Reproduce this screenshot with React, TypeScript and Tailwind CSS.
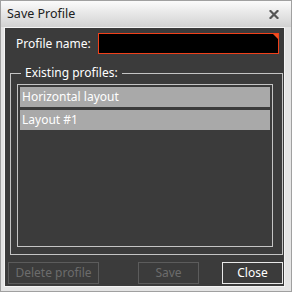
import React from 'react';

const font = { fontFamily: '"Noto Sans", "Open Sans", sans-serif' };

function SaveProfileDialog() {
  const profiles = ['Horizontal layout', 'Layout #1'];

  return (
    <div
      className="w-[292px] h-[292px] flex flex-col bg-[#e4e4e4] border border-[#a0a0a0] text-[12px]"
      style={font}
    >
      <div className="h-[26px] flex items-center justify-between pl-[6px] pr-[12px] bg-gradient-to-b from-[#fbfbfb] to-[#d2d2d2]">
        <span className="text-[#202020] text-[12.5px]">Save Profile</span>
        <svg width="10" height="9" viewBox="0 0 10 9">
          <path d="M1.5 1 L8.5 8 M8.5 1 L1.5 8" stroke="#555" strokeWidth="2.2" strokeLinecap="square" />
        </svg>
      </div>
      <div className="flex-1 ml-[3px] mr-[6px] mb-[4px] flex flex-col border border-[#f4f4f4] bg-[#3b3b3b]">
        <div className="flex items-center mt-[5px] h-[21px]">
          <span className="ml-[11px] w-[82px] text-white">Profile name:</span>
          <div className="relative w-[181px] h-[21px] bg-black border border-[#f0401a]">
            <div className="absolute top-0 right-0 w-0 h-0 border-t-[5px] border-l-[5px] border-t-[#f0501e] border-l-transparent" />
          </div>
        </div>
        <fieldset className="mt-[11px] ml-[5px] mr-[1px] border border-[#c4c4c4] pl-[6px] pr-[9px] pb-[7px]">
          <legend className="ml-[4px] px-[4px] text-white leading-[16px]">Existing profiles:</legend>
          <div className="mt-[3px] h-[163px] border border-[#c4c4c4] p-[2px] flex flex-col gap-[3px]">
            {profiles.map((p) => (
              <div key={p} className="h-[20px] bg-[#a9a9a9] text-white pl-[2px] leading-[20px]">
                {p}
              </div>
            ))}
          </div>
        </fieldset>
        <div className="flex mt-[7px] h-[22px]">
          <button className="ml-[3px] w-[91px] border border-[#5c5c5c] text-[#6c6c6c]">Delete profile</button>
          <button className="ml-[39px] w-[61px] border border-[#5c5c5c] text-[#6c6c6c]">Save</button>
          <button className="ml-[23px] w-[61px] border border-[#e8e8e8] text-white">Close</button>
        </div>
      </div>
    </div>
  );
}

export default function App() {
  return <SaveProfileDialog />;
}
